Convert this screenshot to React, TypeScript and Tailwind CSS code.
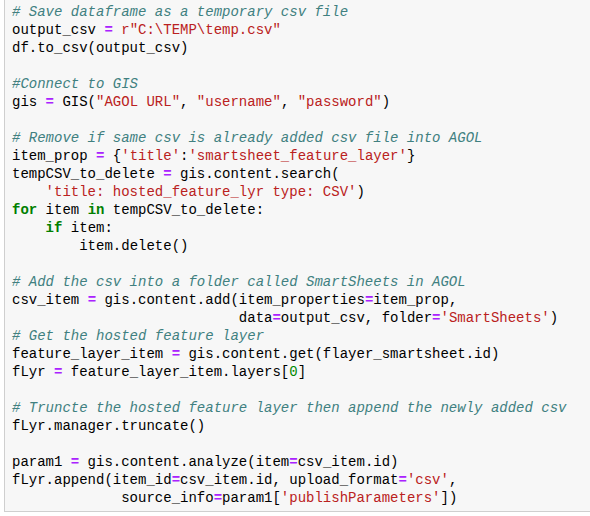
import type { ReactNode } from 'react';

// token helpers, colours from the classic notebook theme
const C = ({ children }: { children: ReactNode }) => (
  <span className="italic text-[#408080]">{children}</span>
);
const S = ({ children }: { children: ReactNode }) => <span className="text-[#ba2121]">{children}</span>;
const K = ({ children }: { children: ReactNode }) => (
  <span className="font-bold text-[#008000]">{children}</span>
);
const O = ({ children }: { children: ReactNode }) => (
  <span className="font-bold text-[#aa22ff]">{children}</span>
);
const N = ({ children }: { children: ReactNode }) => <span className="text-[#008800]">{children}</span>;

const lines: ReactNode[] = [
  <C># Save dataframe as a temporary csv file</C>,
  <>output_csv <O>=</O> <S>r"C:\TEMP\temp.csv"</S></>,
  <>df.to_csv(output_csv)</>,
  '',
  <C>#Connect to GIS</C>,
  <>gis <O>=</O> GIS(<S>"AGOL URL"</S>, <S>"username"</S>, <S>"password"</S>)</>,
  '',
  <C># Remove if same csv is already added csv file into AGOL</C>,
  <>item_prop <O>=</O> {'{'}<S>'title'</S>:<S>'smartsheet_feature_layer'</S>{'}'}</>,
  <>tempCSV_to_delete <O>=</O> gis.content.search(</>,
  <>{'    '}<S>'title: hosted_feature_lyr type: CSV'</S>)</>,
  <><K>for</K> item <K>in</K> tempCSV_to_delete:</>,
  <>{'    '}<K>if</K> item:</>,
  <>{'        '}item.delete()</>,
  '',
  <C># Add the csv into a folder called SmartSheets in AGOL</C>,
  <>csv_item <O>=</O> gis.content.add(item_properties<O>=</O>item_prop,</>,
  <>{'                           '}data<O>=</O>output_csv, folder<O>=</O><S>'SmartSheets'</S>)</>,
  <C># Get the hosted feature layer</C>,
  <>feature_layer_item <O>=</O> gis.content.get(flayer_smartsheet.id)</>,
  <>fLyr <O>=</O> feature_layer_item.layers[<N>0</N>]</>,
  '',
  <C># Truncte the hosted feature layer then append the newly added csv</C>,
  <>fLyr.manager.truncate()</>,
  '',
  <>param1 <O>=</O> gis.content.analyze(item<O>=</O>csv_item.id)</>,
  <>fLyr.append(item_id<O>=</O>csv_item.id, upload_format<O>=</O><S>'csv'</S>,</>,
  <>{'             '}source_info<O>=</O>param1[<S>'publishParameters'</S>])</>,
];

export default function App() {
  return (
    <div className="min-h-screen bg-white">
      <div className="ml-[4px] border-b border-l border-[#cfcfcf] bg-[#f7f7f7] pb-[4px] pl-[7px] pt-[3px]">
        <pre className="font-['Liberation_Mono',monospace] text-[14px] leading-[18px] text-[#000000]">
          {lines.map((line, i) => (
            <div key={i} className="h-[18px] whitespace-pre">
              {line}
            </div>
          ))}
        </pre>
      </div>
    </div>
  );
}
